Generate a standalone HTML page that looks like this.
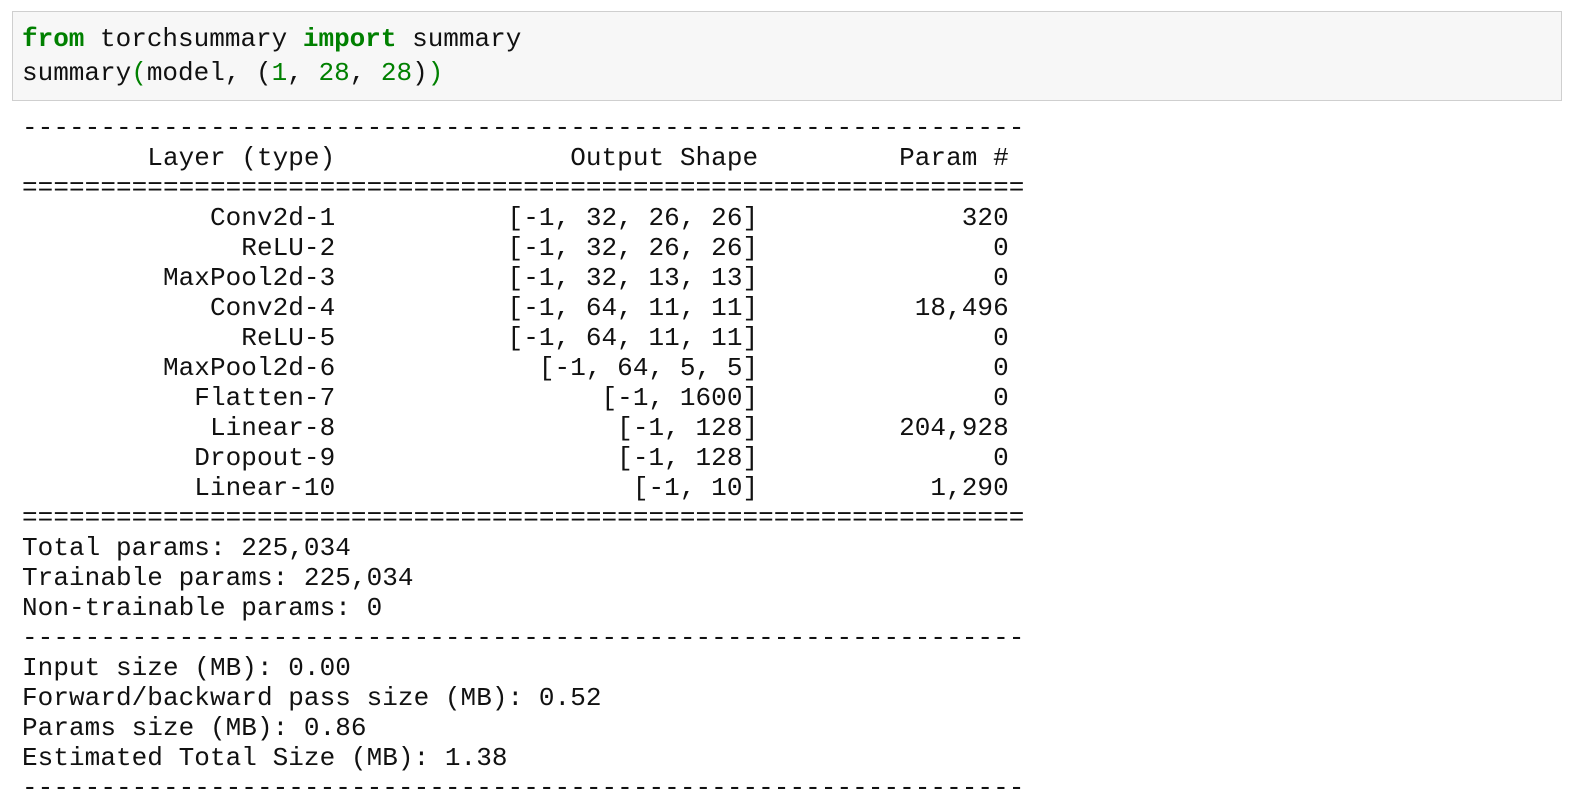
<!DOCTYPE html>
<html><head><meta charset="utf-8"><style>
body{margin:0;background:#fff;width:1574px;height:800px;overflow:hidden;font-family:"Liberation Mono","DejaVu Sans Mono",monospace;font-size:26px;color:#111}
.cell{position:absolute;left:12px;top:11px;width:1550px;height:90px;background:#f7f7f7;border:1px solid #cfcfcf;box-sizing:border-box}
.cell pre{margin:0;position:absolute;left:9px;top:10px;font:inherit;line-height:34px}
.k{color:#008000;font-weight:bold}.n{color:#008000}
.out{position:absolute;left:22px;top:113px;margin:0;font:inherit;line-height:30px;white-space:pre;letter-spacing:0.06px}
</style></head><body>
<div class="cell"><pre><span class="k">from</span> torchsummary <span class="k">import</span> summary
summary<span class="n">(</span>model, (<span class="n">1</span>, <span class="n">28</span>, <span class="n">28</span>)<span class="n">)</span></pre></div>
<pre class="out">----------------------------------------------------------------
        Layer (type)               Output Shape         Param #
================================================================
            Conv2d-1           [-1, 32, 26, 26]             320
              ReLU-2           [-1, 32, 26, 26]               0
         MaxPool2d-3           [-1, 32, 13, 13]               0
            Conv2d-4           [-1, 64, 11, 11]          18,496
              ReLU-5           [-1, 64, 11, 11]               0
         MaxPool2d-6             [-1, 64, 5, 5]               0
           Flatten-7                 [-1, 1600]               0
            Linear-8                  [-1, 128]         204,928
           Dropout-9                  [-1, 128]               0
           Linear-10                   [-1, 10]           1,290
================================================================
Total params: 225,034
Trainable params: 225,034
Non-trainable params: 0
----------------------------------------------------------------
Input size (MB): 0.00
Forward/backward pass size (MB): 0.52
Params size (MB): 0.86
Estimated Total Size (MB): 1.38
----------------------------------------------------------------</pre>
</body></html>
